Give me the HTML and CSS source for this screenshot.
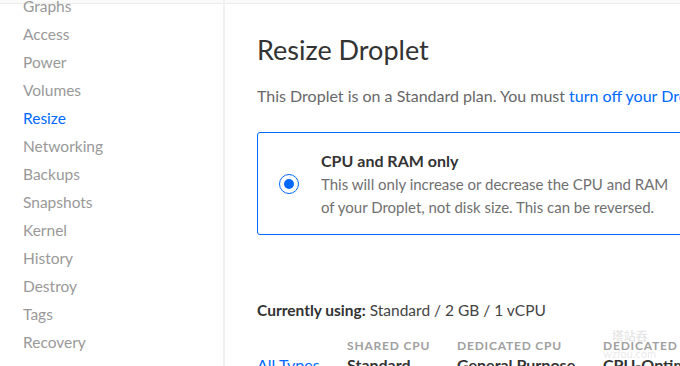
FILE: index.html
```html
<!DOCTYPE html>
<html lang="en">
<head>
    <meta charset="UTF-8">
    <title>Resize Droplet</title>
    <link rel="stylesheet" href="styles.css">
</head>
<body>
    <div class="topbar"></div>
    <div class="layout">
        <nav class="sidebar">
            <a class="nav-item">Graphs</a>
            <a class="nav-item">Access</a>
            <a class="nav-item">Power</a>
            <a class="nav-item">Volumes</a>
            <a class="nav-item active">Resize</a>
            <a class="nav-item">Networking</a>
            <a class="nav-item">Backups</a>
            <a class="nav-item">Snapshots</a>
            <a class="nav-item">Kernel</a>
            <a class="nav-item">History</a>
            <a class="nav-item">Destroy</a>
            <a class="nav-item">Tags</a>
            <a class="nav-item">Recovery</a>
        </nav>

        <main class="content">
            <h1 class="title">Resize Droplet</h1>
            <p class="intro">This Droplet is on a Standard plan. You must <a class="link">turn off your Droplet</a> before resizing.</p>

            <div class="option">
                <span class="radio"><span class="radio-dot"></span></span>
                <div class="option-text">
                    <strong class="option-title">CPU and RAM only</strong>
                    <p class="option-desc">This will only increase or decrease the CPU and RAM<br>of your Droplet, not disk size. This can be reversed.</p>
                </div>
            </div>

            <p class="current"><strong>Currently using:</strong> Standard / 2 GB / 1 vCPU</p>

            <div class="plans">
                <div class="plan-col plan-all">
                    <span class="plan-label">&nbsp;</span>
                    <a class="plan-name link">All Types</a>
                </div>
                <div class="plan-col plan-shared">
                    <span class="plan-label">Shared CPU</span>
                    <span class="plan-name">Standard</span>
                </div>
                <div class="plan-col plan-general">
                    <span class="plan-label">Dedicated CPU</span>
                    <span class="plan-name">General Purpose</span>
                </div>
                <div class="plan-col">
                    <span class="plan-label">Dedicated CPU</span>
                    <span class="plan-name">CPU-Optimized</span>
                </div>
            </div>
        </main>
    </div>
    <div class="watermark">
        <span class="wm-cn">塔站吞</span>
        <span class="wm-en">wzfou.com</span>
    </div>
</body>
</html>
```

FILE: styles.css
```css
html, body {
    margin: 0;
    padding: 0;
    height: 100%;
    overflow: hidden;
}
body {
    font-family: Lato, "Open Sans", sans-serif;
    background: #fff;
    color: #444;
    position: relative;
}
.topbar {
    height: 3px;
    background: #fafafa;
    border-bottom: 1px solid #ececec;
}
.layout {
    display: flex;
    height: 100%;
}
.sidebar {
    width: 223px;
    flex-shrink: 0;
    border-right: 2px solid #f1f1f1;
    display: flex;
    flex-direction: column;
    margin-top: -12px;
}
.nav-item {
    display: block;
    padding-left: 23px;
    height: 28px;
    line-height: 28px;
    font-size: 15.5px;
    color: #999;
}
.nav-item.active {
    color: #0069ff;
}
.content {
    flex: 1;
    padding-left: 32px;
    white-space: nowrap;
    overflow: hidden;
}
.title {
    margin: 29px 0 0;
    font-size: 27px;
    font-weight: 400;
    color: #333;
    line-height: 34px;
}
.intro {
    margin: 18px 0 0;
    font-size: 16px;
    color: #676767;
    line-height: 22px;
}
.link {
    color: #0069ff;
}
.option {
    margin-top: 25px;
    width: 600px;
    height: 103px;
    border: 1px solid #0069ff;
    border-radius: 3px;
    display: flex;
    align-items: center;
    box-sizing: border-box;
}
.radio {
    width: 20px;
    height: 20px;
    margin-left: 21px;
    margin-right: 22px;
    border: 1px solid #0069ff;
    border-radius: 50%;
    box-sizing: border-box;
    display: flex;
    align-items: center;
    justify-content: center;
    flex-shrink: 0;
}
.radio-dot {
    width: 10px;
    height: 10px;
    border-radius: 50%;
    background: #0069ff;
}
.option-text {
    padding-top: 2px;
}
.option-title {
    display: block;
    font-size: 16px;
    font-weight: 700;
    color: #333;
    line-height: 22px;
}
.option-desc {
    margin: 1px 0 0;
    font-size: 15px;
    color: #707070;
    line-height: 23px;
}
.current {
    margin: 64px 0 0;
    font-size: 15.5px;
    color: #444;
    line-height: 22px;
}
.current strong {
    color: #333;
}
.plans {
    display: flex;
    margin-top: 17px;
}
.plan-col {
    display: flex;
    flex-direction: column;
    flex-shrink: 0;
}
.plan-all {
    width: 90px;
}
.plan-shared {
    width: 110px;
}
.plan-general {
    width: 146px;
}
.plan-label {
    font-size: 12px;
    font-weight: 700;
    letter-spacing: 0.8px;
    text-transform: uppercase;
    color: #a0a0a0;
    line-height: 16px;
}
.plan-name {
    font-size: 16px;
    font-weight: 700;
    color: #333;
    line-height: 22px;
}
.plan-all .plan-name {
    font-weight: 400;
    color: #0069ff;
}
.watermark {
    position: absolute;
    right: 24px;
    bottom: 7px;
    display: flex;
    flex-direction: column;
    align-items: center;
    color: rgba(160, 160, 160, 0.25);
    line-height: 1;
    gap: 6px;
}
.wm-cn {
    font-family: "Noto Sans CJK SC", sans-serif;
    font-size: 12px;
    font-weight: 700;
}
.wm-en {
    font-size: 11px;
}
```
